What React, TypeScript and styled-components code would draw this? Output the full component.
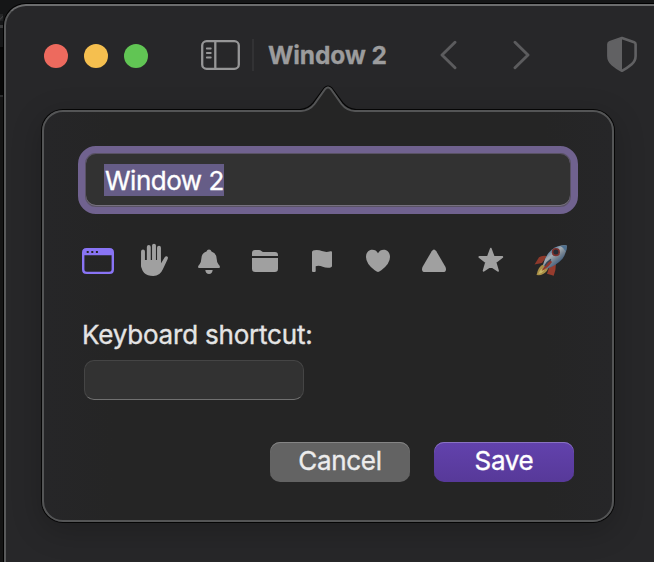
import React from "react";
import styled, { createGlobalStyle } from "styled-components";

const GlobalStyle = createGlobalStyle`
  *, *::before, *::after { box-sizing: border-box; }
  html, body { margin: 0; padding: 0; background: #070707; }
  body { overflow: hidden; font-family: Inter, "Liberation Sans", sans-serif; }
  svg { display: block; flex: none; }
`;

const Desktop = styled.main`
  width: 654px;
  height: 562px;
  padding: 4px 0 0 4px;
  overflow: hidden;
  background:
    linear-gradient(#3b3c3d, #3b3c3d) 0 25px / 3px 3px no-repeat,
    linear-gradient(135deg, #242526 40%, #3b3c3d 50%, #202122 75%) 0 14px / 3px 7px no-repeat,
    linear-gradient(#050505 0 2px, #070707 2px 48px, #2b2c2d 48px 50px, #141414 50px) 0 47px / 4px 520px no-repeat,
    #151617;
`;

const Window = styled.section`
  position: relative;
  width: 700px;
  height: 600px;
  border: 2px solid #58595a;
  border-top-color: #6c6d6e;
  border-radius: 22px;
  background: #272729;
  box-shadow: 0 0 0 1px #000;
`;

const Toolbar = styled.header`
  display: flex;
  align-items: center;
  height: 98px;
  padding-left: 38px;
`;

const Lights = styled.div`
  display: flex;
  gap: 16px;
  margin: 2px 53px 0 0;
`;

const Light = styled.span<{ $color: string }>`
  width: 24px;
  height: 24px;
  border-radius: 50%;
  background: ${(p) => p.$color};
`;

const Divider = styled.span`
  width: 2px;
  height: 32px;
  margin: 0 14px 0 12px;
  background: #323234;
`;

const Title = styled.h1`
  width: 172px;
  margin: 0;
  color: #9c9c9d;
  font-size: 24.5px;
  font-weight: 700;
  line-height: 32px;
  letter-spacing: -0.1px;
  white-space: nowrap;
  -webkit-text-stroke: 0.3px #9c9c9d;
`;

const NavButtons = styled.nav`
  display: flex;
  gap: 56px;
  margin-right: 77px;
`;

const Popover = styled.div`
  position: absolute;
  left: 36px;
  top: 104px;
  width: 572px;
  height: 412px;
  padding: 34px;
  border: 2px solid #545556;
  border-radius: 21px;
  background: linear-gradient(90deg, #262628, #252525 12%, #252525 88%, #262628);
  box-shadow: 0 0 0 1px #050505, 0 8px 30px 2px rgba(0, 0, 0, 0.2);
`;

const Arrow = styled.svg`
  position: absolute;
  left: 252px;
  top: -28px;
`;

const NameField = styled.div`
  display: flex;
  align-items: center;
  width: 500px;
  height: 68px;
  padding-left: 19px;
  border: 7px solid #70628f;
  border-radius: 18px;
  background: #323232;
  box-shadow: inset 0 0 0 1px #595264, inset 0 -1px 0 1px #77717f;
`;

const Selection = styled.span`
  width: 120px;
  height: 32px;
  padding-left: 1px;
  background: #665d87;
  color: #fff;
  font-size: 26px;
  line-height: 33px;
  letter-spacing: -0.5px;
  white-space: nowrap;
  -webkit-text-stroke: 0.35px #fff;
`;

const IconRow = styled.div`
  display: flex;
  gap: 20px;
  margin: 29px 0 0 2px;
  color: #a0a0a0;

  svg:first-child { color: #8974f5; }
  svg:last-child { margin-left: 4px; }
`;

const Label = styled.label`
  display: block;
  margin: 39px 0 0 4px;
  color: #e4e4e4;
  font-size: 26px;
  line-height: 34px;
  letter-spacing: -0.2px;
  white-space: nowrap;
  -webkit-text-stroke: 0.35px #e4e4e4;
`;

const ShortcutField = styled.div`
  width: 220px;
  height: 40px;
  margin: 8px 0 0 6px;
  border: 1px solid #454545;
  border-bottom-color: #707070;
  border-radius: 10px;
  background: #323232;
`;

const Actions = styled.div`
  display: flex;
  gap: 24px;
  margin: 42px 0 0 192px;
`;

const Button = styled.button<{ $primary?: boolean }>`
  width: 140px;
  height: 40px;
  padding: 0 0 2px;
  border: 0;
  border-radius: 10px;
  background: ${(p) => (p.$primary ? "linear-gradient(#6242ad, #573999)" : "#636363")};
  box-shadow: inset 0 1px 0 ${(p) => (p.$primary ? "#8972c2" : "#858585")};
  color: ${(p) => (p.$primary ? "#fff" : "#ececec")};
  font: 400 26px/38px Inter, "Liberation Sans", sans-serif;
  letter-spacing: -0.3px;
  -webkit-text-stroke: 0.35px currentColor;
`;

const Glyph = ({ children }: { children: React.ReactNode }) => (
  <svg width="36" height="36" viewBox="0 0 36 36" fill="currentColor">
    {children}
  </svg>
);

const SidebarIcon = () => (
  <svg width="39" height="32" viewBox="0 0 39 32" fill="none" stroke="#969697" strokeWidth="2.3">
    <rect x="1.2" y="2.2" width="36.6" height="27.6" rx="4.4" />
    <path d="M14.3 2.5v27" />
    <path d="M5.8 9.5h4M5.8 14h4M5.8 18.5h4" strokeWidth="1.8" strokeLinecap="round" />
  </svg>
);

const Chevron = ({ flip }: { flip?: boolean }) => (
  <svg width="17" height="30" viewBox="0 0 17 30" fill="none" stroke="#5c5c5e" strokeWidth="2.9" strokeLinecap="round" strokeLinejoin="round">
    <path d={flip ? "M2 2.3L15 15L2 27.7" : "M15 2.3L2 15L15 27.7"} />
  </svg>
);

const ShieldIcon = () => (
  <svg width="30" height="38" viewBox="0 0 30 38">
    <path d="M15 2L27.2 6.2Q28.6 6.7 28.6 8.2V20Q28.6 24.8 24.7 28.2Q20.5 31.8 15 34.8Q9.5 31.8 5.3 28.2Q1.4 24.8 1.4 20V8.2Q1.4 6.7 2.8 6.2Z" fill="none" stroke="#616163" strokeWidth="2.6" strokeLinejoin="round" />
    <path d="M15 2V34Q1.4 28 1.4 20V7Z" fill="#616163" />
  </svg>
);

const RocketIcon = () => (
  <Glyph>
    <defs>
      <linearGradient id="hull" x1="0.25" y1="0.2" x2="0.7" y2="0.75">
        <stop offset="0" stopColor="#477099" />
        <stop offset="0.35" stopColor="#a4acb2" />
        <stop offset="0.65" stopColor="#758391" />
        <stop offset="1" stopColor="#3d5c7e" />
      </linearGradient>
    </defs>
    <path d="M15 13Q10 12 7 14.3L2.5 21.5L10 20Z" fill="#8d392b" />
    <path d="M24 20Q24 27 21.7 32.8L15 30.8L17 25Z" fill="#963c2e" />
    <path d="M11.5 21.3Q6 23.5 4.6 32Q11 33 14.8 28L17 24Z" fill="#a98f47" />
    <path d="M9.5 26Q7.3 28 6.3 31Q10 30.5 12 27.5Z" fill="#c9b867" />
    <path d="M11 22Q13 12.5 20 6.5Q26.5 1.7 34.7 2.4Q35 9.5 30.5 15.8Q24.5 22.5 14.5 26Z" fill="url(#hull)" />
    <path d="M28.4 3Q31.5 2 34.7 2.4Q34.9 5.8 33.8 8.8Q32.3 5 28.4 3Z" fill="#4e7090" />
    <path d="M18 17Q12.5 22 9.5 28Q16 25 20 19Z" fill="#8e372d" />
    <path d="M19 16.3Q15 19 12.8 22.8" fill="none" stroke="#354657" strokeWidth="1.4" />
    <circle cx="23.9" cy="9.2" r="4.1" fill="#7b302c" />
    <circle cx="23.9" cy="9" r="2.5" fill="#242b34" />
  </Glyph>
);

const SpaceIcons = () => (
  <IconRow>
    <Glyph>
      <path fillRule="evenodd" d="M6.5 5H29.5Q34 5 34 9.5V26.5Q34 31 29.5 31H6.5Q2 31 2 26.5V9.5Q2 5 6.5 5ZM4.4 12.3V26.2Q4.4 28.7 6.9 28.7H29.1Q31.6 28.7 31.6 26.2V12.3Z" />
      <path d="M6.7 8h2v2h-2zM11.3 8h2v2h-2zM15.9 8h2v2h-2z" fill="#252525" />
    </Glyph>
    <Glyph>
      <path d="M7 8.5V23M12.8 4V19M18 2.6V19M23 4.8V20" fill="none" stroke="currentColor" strokeWidth="3.9" strokeLinecap="round" />
      <path d="M5.2 17H24.9V20.6L28.7 14.2Q29.8 12.7 31.3 13.4Q32.5 14.2 31.7 16L27 26Q24 33 17.3 33Q5.2 33 5.2 21Z" />
    </Glyph>
    <Glyph>
      <path d="M17 6.5Q18.9 6.5 19.5 8.4Q24.6 10 24.7 16Q24.8 19.5 26.4 21.3Q28 23 28 24Q28 25 26.8 25H7.2Q6 25 6 24Q6 23 7.6 21.3Q9.2 19.5 9.3 16Q9.4 10 14.5 8.4Q15.1 6.5 17 6.5Z" />
      <path d="M13.3 27H20.7Q20.2 31 17 31Q13.8 31 13.3 27Z" />
    </Glyph>
    <Glyph>
      <path d="M4 13V10Q4 7 7 7H11Q12.4 7 13.4 8.1Q14.2 9 15.5 9H27Q30 9 30 12V13Z" />
      <path d="M4 15H30V25.7Q30 29 26.7 29H7.3Q4 29 4 25.7Z" />
    </Glyph>
    <Glyph>
      <path d="M8 9Q8 7 12.5 7C17 7 19 8.9 22.5 8.9C25 8.9 26.2 8.2 27.2 8.2Q28 8.2 28 9.2V23Q28 24.7 24.2 24.8C20 24.9 17.5 22.8 14.2 22.8Q12.4 22.8 11.7 23.2V28Q11.7 29 10.7 29H9Q8 29 8 28Z" />
    </Glyph>
    <Glyph>
      <path d="M18 29.1Q17.1 29.1 14.7 27.3Q6 20.7 6 14C6 9.8 8.5 6.8 12.3 6.8Q16.1 6.8 18 10.2Q19.9 6.8 23.7 6.8C27.5 6.8 30 9.8 30 14Q30 20.7 21.3 27.3Q18.9 29.1 18 29.1Z" />
    </Glyph>
    <Glyph>
      <path d="M15.7 8.2Q18 4.9 20.3 8.2L29.5 24Q31.2 29 27 29H9Q4.8 29 6.5 24Z" />
    </Glyph>
    <Glyph>
      <path d="M18.8 5.7L21.8 14H30.3L23.5 19.3L26 27.8L18.8 22.9L11.6 27.8L14.1 19.3L7.3 14H15.8Z" stroke="currentColor" strokeWidth="1.8" strokeLinejoin="round" />
    </Glyph>
    <RocketIcon />
  </IconRow>
);

export default function App() {
  return (
    <>
      <GlobalStyle />
      <Desktop>
        <Window>
          <Toolbar>
            <Lights>
              <Light $color="#ed6a5e" />
              <Light $color="#f5bf4f" />
              <Light $color="#61c554" />
            </Lights>
            <SidebarIcon />
            <Divider />
            <Title>Window 2</Title>
            <NavButtons>
              <Chevron />
              <Chevron flip />
            </NavButtons>
            <ShieldIcon />
          </Toolbar>
          <Popover>
            <Arrow width="64" height="30" viewBox="0 0 64 30">
              <path d="M0 30V27H5Q14 26.5 19 20L29 6Q32 2.5 35 6L45 20Q50 26.5 59 27H64V30Z" fill="#252525" />
              <path d="M0 25.5H4Q12 25 17.3 18.7L28.3 4Q32 0 35.7 4L46.7 18.7Q52 25 60 25.5H64" fill="none" stroke="#050505" strokeWidth="1.2" />
              <path d="M0 27H5Q13.5 26.5 18.5 20L29 5.2Q32 2 35 5.2L45.5 20Q50.5 26.5 59 27H64" fill="none" stroke="#545556" strokeWidth="2" />
            </Arrow>
            <NameField>
              <Selection>Window 2</Selection>
            </NameField>
            <SpaceIcons />
            <Label>Keyboard shortcut:</Label>
            <ShortcutField />
            <Actions>
              <Button>Cancel</Button>
              <Button $primary>Save</Button>
            </Actions>
          </Popover>
        </Window>
      </Desktop>
    </>
  );
}
